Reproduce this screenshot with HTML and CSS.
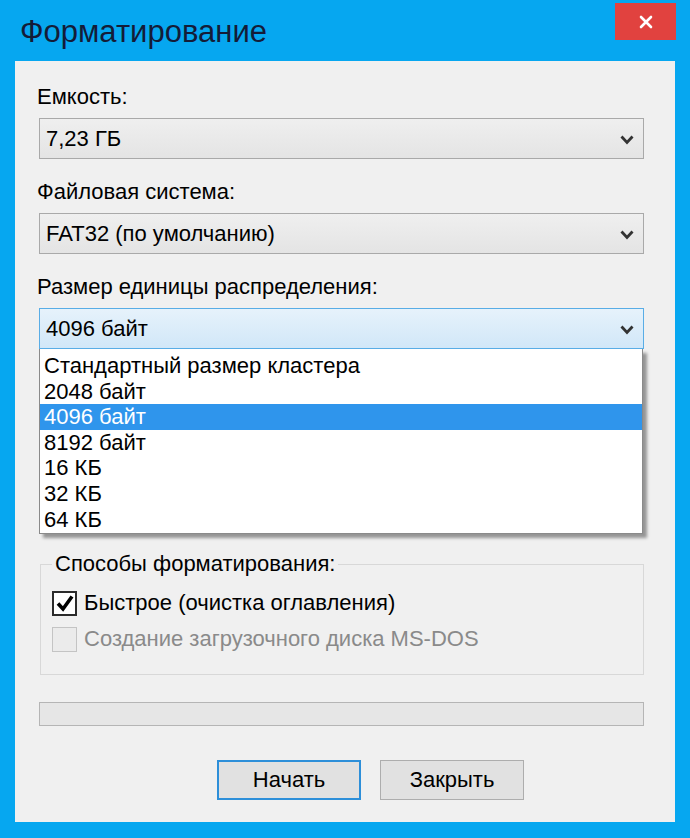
FILE: index.html
```html
<!DOCTYPE html>
<html lang="ru">
<head>
<meta charset="utf-8">
<title>Форматирование</title>
<link rel="stylesheet" href="styles.css">
</head>
<body>
<div class="window">
  <div class="titlebar">
    <div class="title">Форматирование</div>
    <div class="close">
      <svg width="14" height="14" viewBox="0 0 14 14"><path d="M2 2 L12 12 M12 2 L2 12" stroke="#fff" stroke-width="2.6" stroke-linecap="round"/></svg>
    </div>
  </div>
  <div class="panel">
    <div class="field">
      <div class="label">Емкость:</div>
      <div class="combo">
        <span>7,23 ГБ</span>
        <svg class="chev" width="14" height="10" viewBox="0 0 14 10"><path d="M1.5 1.5 L7 7.5 L12.5 1.5" fill="none" stroke="#333" stroke-width="2.8"/></svg>
      </div>
    </div>
    <div class="field">
      <div class="label">Файловая система:</div>
      <div class="combo">
        <span>FAT32 (по умолчанию)</span>
        <svg class="chev" width="14" height="10" viewBox="0 0 14 10"><path d="M1.5 1.5 L7 7.5 L12.5 1.5" fill="none" stroke="#333" stroke-width="2.8"/></svg>
      </div>
    </div>
    <div class="field open">
      <div class="label">Размер единицы распределения:</div>
      <div class="combo focused">
        <span>4096 байт</span>
        <svg class="chev" width="14" height="10" viewBox="0 0 14 10"><path d="M1.5 1.5 L7 7.5 L12.5 1.5" fill="none" stroke="#333" stroke-width="2.8"/></svg>
      </div>
      <ul class="dropdown">
        <li>Стандартный размер кластера</li>
        <li>2048 байт</li>
        <li class="sel">4096 байт</li>
        <li>8192 байт</li>
        <li>16 КБ</li>
        <li>32 КБ</li>
        <li>64 КБ</li>
      </ul>
    </div>
    <div class="covered"></div>
    <fieldset class="group">
      <legend>Способы форматирования:</legend>
      <div class="check">
        <span class="box on">
          <svg width="20" height="20" viewBox="0 0 20 20"><path d="M3 10.5 L8 16 L17 3.5" fill="none" stroke="#000" stroke-width="3.6"/></svg>
        </span>
        <span>Быстрое (очистка оглавления)</span>
      </div>
      <div class="check disabled">
        <span class="box"></span>
        <span>Создание загрузочного диска MS-DOS</span>
      </div>
    </fieldset>
    <div class="progress"></div>
    <div class="buttons">
      <div class="btn default">Начать</div>
      <div class="btn">Закрыть</div>
    </div>
  </div>
</div>
</body>
</html>
```

FILE: styles.css
```css
* { box-sizing: border-box; }

html, body {
  margin: 0;
  padding: 0;
}

body {
  background: #06a7f0;
  font-family: "Liberation Sans", Arial, sans-serif;
  color: #000;
  width: 690px;
  height: 838px;
  overflow: hidden;
}

.window {
  display: flex;
  flex-direction: column;
}

.titlebar {
  height: 61px;
  display: flex;
  justify-content: space-between;
  align-items: flex-start;
}

.title {
  font-size: 31px;
  color: #141c38;
  padding: 14px 0 0 20px;
  line-height: 36px;
}

.close {
  width: 61px;
  height: 37px;
  margin: 3px 14px 0 0;
  background: #e1423f;
  display: flex;
  align-items: center;
  justify-content: center;
}

.panel {
  margin: 0 15px;
  height: 761px;
  background: #f0f0f0;
  padding: 24px 31px 0 24px;
  display: flex;
  flex-direction: column;
}

.field {
  position: relative;
  margin-bottom: 21px;
}

.field.open {
  margin-bottom: 0;
}

.label {
  font-size: 22px;
  line-height: 24px;
  margin: 0 0 9px -2px;
}

.combo {
  height: 41px;
  border: 1px solid #a9a9a9;
  background: linear-gradient(#efefef, #e4e4e4);
  display: flex;
  align-items: center;
  justify-content: space-between;
  padding: 0 9px 0 6px;
  font-size: 22px;
}

.combo.focused {
  border-color: #59ade6;
  background: linear-gradient(#e6f2fb, #d1e7f8);
}

.chev {
  margin-top: 2px;
}

.dropdown {
  position: absolute;
  left: 0;
  right: 1px;
  top: 100%;
  margin: 0;
  padding: 4px 0 1px;
  list-style: none;
  background: #fff;
  border: 1px solid #8a8a8a;
  border-top: none;
  box-shadow: 4px 4px 3px rgba(0, 0, 0, 0.38);
  z-index: 2;
}

.dropdown li {
  height: 25.6px;
  line-height: 25px;
  font-size: 22px;
  padding-left: 4px;
}

.dropdown li.sel {
  background: #2f95ec;
  color: #fff;
}

.covered {
  height: 203px;
}

.group {
  margin: 0 0 0 1px;
  border: 1px solid #d8d8d8;
  padding: 15px 11px 23px 11px;
  min-width: 0;
}

.group legend {
  font-size: 22px;
  line-height: 24px;
  padding: 0 3px;
}

.check {
  display: flex;
  align-items: center;
  gap: 7px;
  font-size: 22px;
  line-height: 24px;
  height: 24px;
}

.check + .check {
  margin-top: 12px;
}

.box {
  width: 25px;
  height: 25px;
  border: 2px solid #2b2b2b;
  background: #fff;
  display: flex;
  align-items: center;
  justify-content: center;
}

.disabled {
  color: #8a8a8a;
}

.disabled .box {
  border: 1px solid #c4c4c4;
  background: #ebebeb;
}

.progress {
  margin-top: 27px;
  height: 24px;
  border: 1px solid #b5b5b5;
  background: #e6e6e6;
}

.buttons {
  margin-top: 34px;
  display: flex;
  gap: 19px;
  padding-left: 178px;
}

.btn {
  width: 144px;
  height: 40px;
  border: 1px solid #adadad;
  background: #e1e1e1;
  display: flex;
  align-items: center;
  justify-content: center;
  font-size: 22px;
}

.btn.default {
  border: 2px solid #2d8fd9;
}
```
